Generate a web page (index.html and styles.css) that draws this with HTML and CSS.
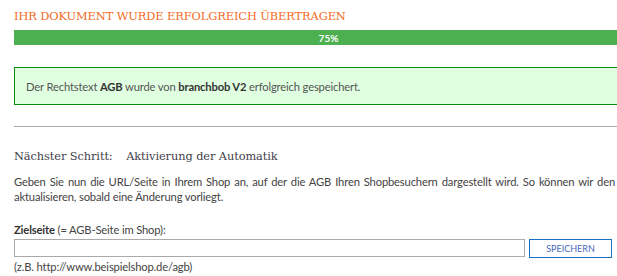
FILE: index.html
```html
<!DOCTYPE html>
<html lang="de">
<head>
<meta charset="utf-8">
<link rel="stylesheet" href="styles.css">
</head>
<body>
<div class="page">
  <h1 class="title">IHR DOKUMENT WURDE ERFOLGREICH ÜBERTRAGEN</h1>
  <div class="progress"><span class="progress-label">75%</span></div>
  <div class="success"><span>Der Rechtstext <b>AGB</b> wurde von <b>branchbob V2</b> erfolgreich gespeichert.</span></div>
  <hr class="divider">
  <h2 class="step"><span class="step-label">Nächster Schritt:</span> Aktivierung der Automatik</h2>
  <p class="intro">Geben Sie nun die URL/Seite in Ihrem Shop an, auf der die AGB Ihren Shopbesuchern dargestellt wird. So können wir den aktualisieren, sobald eine Änderung vorliegt.</p>
  <label class="field-label" for="ziel"><b>Zielseite</b> (= AGB-Seite im Shop):</label>
  <div class="field-row">
    <input class="field-input" id="ziel" type="text">
    <button class="save-btn" type="button">SPEICHERN</button>
  </div>
  <div class="hint">(z.B. http://www.beispielshop.de/agb)</div>
</div>
</body>
</html>
```
FILE: styles.css
```css
html, body {
  margin: 0;
  padding: 0;
  background: #ffffff;
  overflow: hidden;
}
body {
  width: 617px;
  height: 276px;
}
.page {
  padding: 8px 0 0 14px;
  font-family: Lato, "Noto Sans", sans-serif;
  font-size: 11.2px;
  letter-spacing: -0.15px;
  color: #444;
}
.title {
  margin: 0;
  font-family: "DejaVu Serif", serif;
  font-weight: normal;
  font-size: 11.4px;
  letter-spacing: -0.1px;
  line-height: 16px;
  color: #f26b1d;
}
.progress {
  margin-top: 6px;
  height: 15px;
  background: #4caf50;
  display: flex;
  align-items: center;
  justify-content: center;
  padding-left: 26px;
}
.progress-label {
  color: #fff;
  font-size: 10px;
  font-weight: bold;
  letter-spacing: 0;
}
.success {
  margin-top: 22px;
  height: 36px;
  border: 1px solid #0a8a0a;
  border-right: none;
  background: #e0ffe0;
  display: flex;
  align-items: center;
  padding-left: 11px;
  color: #555;
}
.success b {
  color: #333;
}
.divider {
  margin: 21px 0 0 0;
  border: none;
  border-top: 1px solid #aaa;
  height: 0;
}
.step {
  margin: 21px 0 0 0;
  font-family: "DejaVu Serif", serif;
  font-weight: normal;
  font-size: 11.4px;
  letter-spacing: -0.1px;
  line-height: 16px;
  color: #3f3f4a;
}
.step-label {
  margin-right: 10px;
}
.intro {
  margin: 10px 0 0 0;
  padding-right: 2px;
  line-height: 15px;
  text-align: justify;
  color: #444;
}
.field-label {
  display: block;
  margin-top: 18px;
  line-height: 15px;
}
.field-label b {
  color: #333;
}
.field-row {
  display: flex;
  gap: 4px;
  margin-top: 2px;
}
.field-input {
  width: 511px;
  height: 18px;
  box-sizing: border-box;
  border: 1px solid #aaa;
  margin: 0;
  padding: 0 4px;
}
.save-btn {
  width: 83px;
  height: 19px;
  box-sizing: border-box;
  border: 1px solid #1a6fc4;
  background: #fff;
  color: #4a68c0;
  font-family: Lato, "Noto Sans", sans-serif;
  font-size: 9px;
  letter-spacing: 0;
  padding: 0;
  margin: 0;
}
.hint {
  margin-top: 1px;
  line-height: 15px;
}
```
